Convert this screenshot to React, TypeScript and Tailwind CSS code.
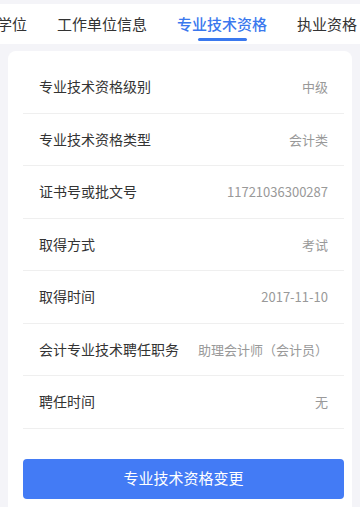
import React from "react";

const rows: [string, string][] = [
  ["专业技术资格级别", "中级"],
  ["专业技术资格类型", "会计类"],
  ["证书号或批文号", "11721036300287"],
  ["取得方式", "考试"],
  ["取得时间", "2017-11-10"],
  ["会计专业技术聘任职务", "助理会计师（会计员）"],
  ["聘任时间", "无"],
];

export default function App() {
  return (
    <div
      className="w-[360px] h-[507px] overflow-hidden bg-[#f4f4f8] pt-[4px]"
      style={{ fontFamily: '"Noto Sans CJK SC", "Noto Sans", sans-serif' }}
    >
      <div className="h-[40px] bg-white overflow-hidden">
        <div className="flex items-center gap-[30px] ml-[-3px] whitespace-nowrap h-full text-[15px] text-[#333]">
          <span className="relative">学位</span>
          <span className="relative">工作单位信息</span>
          <span className="relative text-[#3a78ee] font-medium flex flex-col items-center">
            专业技术资格
            <span className="absolute top-[25px] w-[49px] h-[3px] rounded-full bg-[#3a78ee]" />
          </span>
          <span className="relative">执业资格</span>
        </div>
      </div>
      <div className="mx-[8px] mt-[7px] bg-white rounded-t-[8px] pt-[10px] pl-[15px] pr-[8px] h-[600px]">
        {rows.map(([k, v]) => (
          <div
            key={k}
            className="h-[52.5px] flex items-center justify-between border-b border-[#efefef] px-[16px]"
          >
            <span className="text-[14px] text-[#333]">{k}</span>
            <span className="text-[13px] text-[#999]">{v}</span>
          </div>
        ))}
        <button className="mt-[30px] w-full h-[40px] rounded-[4px] bg-[#437bf5] text-white text-[15px]">
          专业技术资格变更
        </button>
      </div>
    </div>
  );
}
